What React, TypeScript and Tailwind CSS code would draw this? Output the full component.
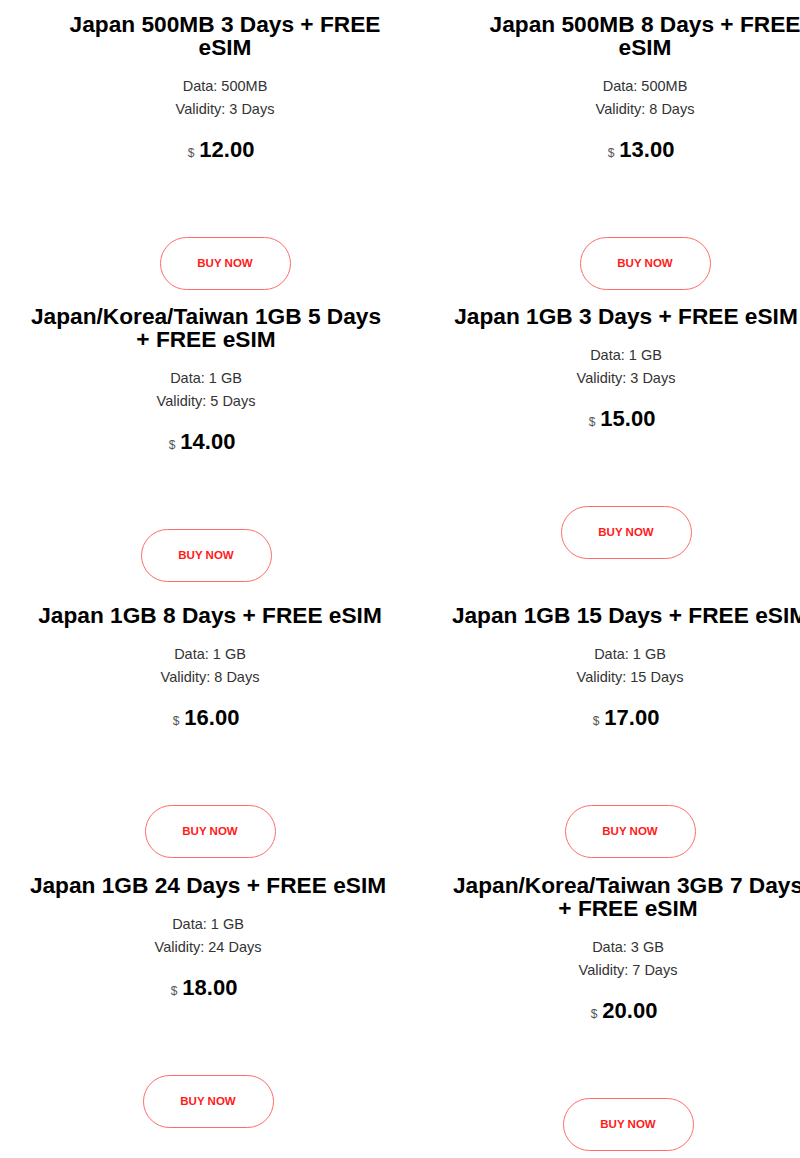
interface Plan {
  title: string
  data: string
  validity: string
  price: string
}

const rows: { offset: string; plans: Plan[] }[] = [
  {
    offset: "pt-[13px] pl-[45px]",
    plans: [
      { title: "Japan 500MB 3 Days + FREE eSIM", data: "500MB", validity: "3 Days", price: "12.00" },
      { title: "Japan 500MB 8 Days + FREE eSIM", data: "500MB", validity: "8 Days", price: "13.00" },
    ],
  },
  {
    offset: "mt-[15px] pl-[26px]",
    plans: [
      { title: "Japan/Korea/Taiwan 1GB 5 Days + FREE eSIM", data: "1 GB", validity: "5 Days", price: "14.00" },
      { title: "Japan 1GB 3 Days + FREE eSIM", data: "1 GB", validity: "3 Days", price: "15.00" },
    ],
  },
  {
    offset: "mt-[22px] pl-[30px]",
    plans: [
      { title: "Japan 1GB 8 Days + FREE eSIM", data: "1 GB", validity: "8 Days", price: "16.00" },
      { title: "Japan 1GB 15 Days + FREE eSIM", data: "1 GB", validity: "15 Days", price: "17.00" },
    ],
  },
  {
    offset: "mt-[16px] pl-[28px]",
    plans: [
      { title: "Japan 1GB 24 Days + FREE eSIM", data: "1 GB", validity: "24 Days", price: "18.00" },
      { title: "Japan/Korea/Taiwan 3GB 7 Days + FREE eSIM", data: "3 GB", validity: "7 Days", price: "20.00" },
    ],
  },
]

function PlanCard({ plan }: { plan: Plan }) {
  return (
    <div className="w-[360px] shrink-0 flex flex-col items-center text-center">
      <h3 className="text-[22.7px] leading-[23px] font-bold text-black">{plan.title}</h3>
      <p className="mt-[16px] text-[14.5px] leading-[23px] text-[#333]">Data: {plan.data}</p>
      <p className="text-[14.5px] leading-[23px] text-[#333]">Validity: {plan.validity}</p>
      <p className="mt-[14px] mr-[8px] leading-[30px] text-black">
        <span className="text-[12px] text-[#555] mr-[5px]">$</span>
        <span className="text-[22px] font-bold">{plan.price}</span>
      </p>
      <button className="mt-[69px] w-[131px] h-[53px] rounded-full border border-[#ff6b6b] bg-white text-[11.5px] font-bold text-[#ff1a1a]">
        BUY NOW
      </button>
    </div>
  )
}

export default function App() {
  return (
    <div className="w-[800px] h-[1158px] overflow-hidden bg-white font-['Liberation_Sans',Arial,sans-serif]">
      {rows.map((row, i) => (
        <div key={i} className={`flex items-start gap-[60px] ${row.offset}`}>
          {row.plans.map((plan) => (
            <PlanCard key={plan.title} plan={plan} />
          ))}
        </div>
      ))}
    </div>
  )
}
